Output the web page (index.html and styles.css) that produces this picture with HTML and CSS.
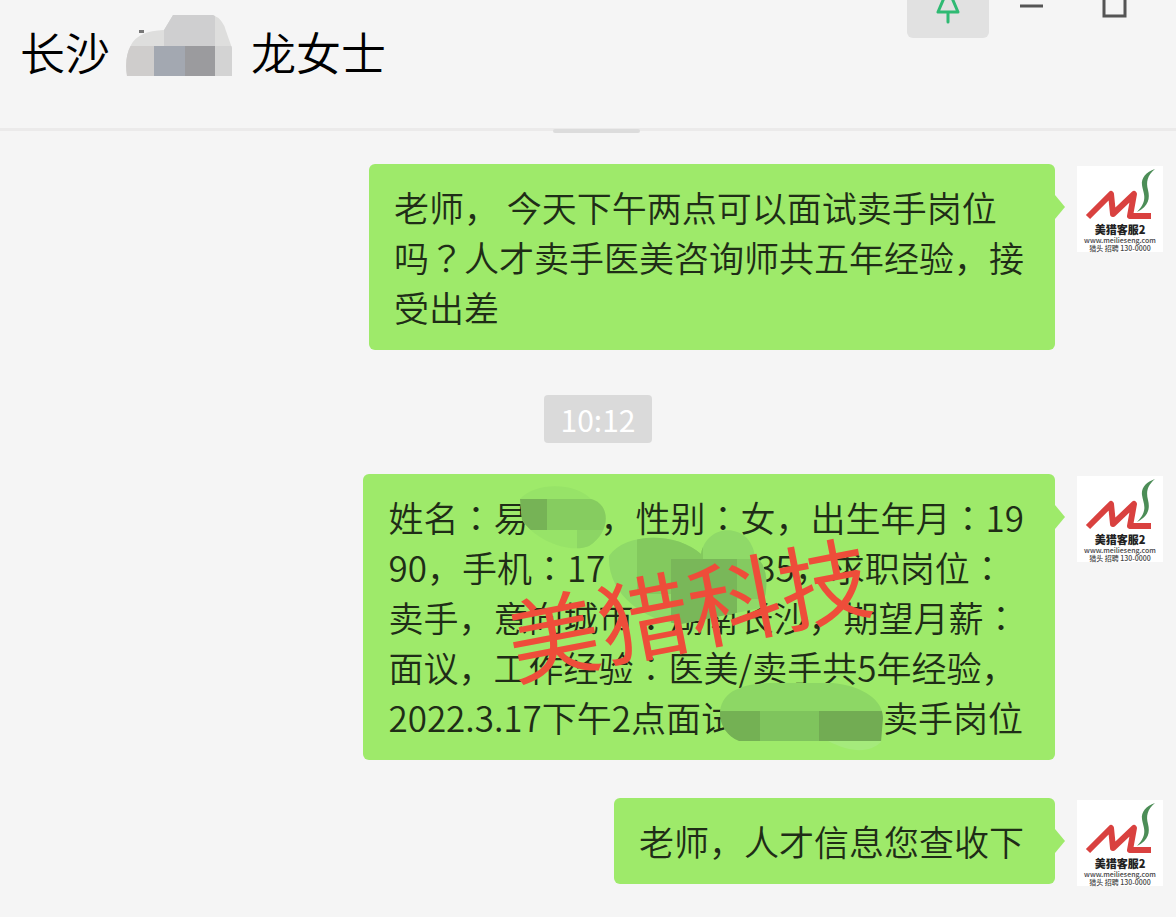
FILE: index.html
```
<!DOCTYPE html>
<html lang="zh-CN">
<head>
    <meta charset="UTF-8">
    <meta name="viewport" content="width=device-width, initial-scale=1">
    <title>长沙 龙女士</title>
    <link rel="stylesheet" href="styles.css">
</head>
<body>
    <svg class="defs" aria-hidden="true">
        <symbol id="logo" viewBox="0 0 86 56">
            <path d="M11 51 L34 28 L36 48 L57 28 L53 50 H74" fill="none" stroke="#d9413f" stroke-width="6" stroke-linejoin="round"/>
            <path d="M78 3 C69 6 64 12 65 19 C66 27 72 34 60 46 C72 40 73 32 71 24 C69 16 70 10 78 3 Z" fill="#4c8d57"/>
        </symbol>
    </svg>

    <header class="header">
        <h1 class="title">
            <span>长沙</span>
            <svg class="title-mask" width="108" height="64" viewBox="0 0 108 64" aria-hidden="true">
                <clipPath id="titleClip">
                    <path d="M2 62 Q-1 44 6 31 Q13 17 39 16 L48 1 H88 Q98 5 101 17 L107 34 V62 Z"/>
                </clipPath>
                <g clip-path="url(#titleClip)">
                    <rect width="108" height="64" fill="#dededd"/>
                    <rect x="39" width="51" height="32" fill="#cfcfd0"/>
                    <rect y="32" width="30" height="32" fill="#cfcdcc"/>
                    <rect x="29" y="32" width="31" height="32" fill="#a3a8b1"/>
                    <rect x="60" y="32" width="30" height="32" fill="#9b9b9e"/>
                    <rect x="90" y="32" width="18" height="32" fill="#d3d3d3"/>
                </g>
                <rect x="14" y="16" width="5" height="3" fill="#777"/>
            </svg>
            <span>龙女士</span>
        </h1>
        <div class="controls">
            <button type="button" class="control pin" aria-label="置顶">
                <svg width="82" height="38" viewBox="0 0 82 38">
                    <path d="M37 -2 L31 12 H51 L45 -2 M41 12 V22" fill="none" stroke="#2fba73" stroke-width="3" stroke-linecap="round" stroke-linejoin="round"/>
                </svg>
            </button>
            <button type="button" class="control" aria-label="最小化">
                <svg width="84" height="38" viewBox="0 0 84 38">
                    <path d="M31 6 H54" stroke="#555" stroke-width="3"/>
                </svg>
            </button>
            <button type="button" class="control" aria-label="最大化">
                <svg width="84" height="38" viewBox="0 0 84 38">
                    <path d="M31 -4 V16 H52 V-4" fill="none" stroke="#555" stroke-width="3"/>
                </svg>
            </button>
        </div>
    </header>

    <main class="chat">
        <div class="message">
            <div class="bubble">
                老师， 今天下午两点可以面试卖手岗位<br>
                吗<span lang="ja" class="mid">？</span>人才卖手医美咨询师共五年经验，接<br>
                受出差
            </div>
            <div class="avatar">
                <svg class="logo" aria-hidden="true"><use href="#logo"/></svg>
                <div class="avatar-name">美猎客服2</div>
                <div class="avatar-small">www.meilieseng.com</div>
                <div class="avatar-small">猎头 招聘 130-0000</div>
            </div>
        </div>

        <time class="time">10:12</time>

        <div class="message">
            <div class="bubble">
                姓名<span lang="ja" class="mid">：</span>易<span class="gap gap-name"></span>，性别<span lang="ja" class="mid">：</span>女，出生年月<span lang="ja" class="mid">：</span>19<br>
                90，手机<span lang="ja" class="mid">：</span>17<span class="gap gap-phone"></span>35，求职岗位<span lang="ja" class="mid">：</span><br>
                卖手，意向城市<span lang="ja" class="mid">：</span>湖南长沙，期望月薪<span lang="ja" class="mid">：</span><br>
                面议，工作经验<span lang="ja" class="mid">：</span>医美/卖手共5年经验，<br>
                2022.3.17下午2点面试<span class="gap gap-place"></span>卖手岗位
                <svg class="mosaic" width="692" height="286" viewBox="0 0 692 286" aria-hidden="true">
                    <clipPath id="nameClip">
                        <path d="M157 25 C172 8 212 8 228 25 C248 30 248 58 226 72 C206 80 172 66 159 46 Z"/>
                    </clipPath>
                    <g clip-path="url(#nameClip)">
                        <rect x="150" y="5" width="100" height="80" fill="#97e368"/>
                        <rect x="150" y="25" width="34" height="31" fill="#76b356"/>
                        <rect x="184" y="25" width="70" height="31" fill="#86cc60"/>
                        <rect x="214" y="56" width="40" height="30" fill="#8cd564"/>
                    </g>
                    <clipPath id="phoneClip">
                        <path d="M246 82 C262 58 314 58 338 80 C344 48 388 48 392 83 C406 90 406 118 398 134 L318 150 C282 148 244 120 246 82 Z"/>
                    </clipPath>
                    <g clip-path="url(#phoneClip)">
                        <rect x="240" y="50" width="170" height="110" fill="#8fd968"/>
                        <rect x="274" y="60" width="66" height="60" fill="#83c95e"/>
                        <rect x="308" y="85" width="66" height="65" fill="#79b759"/>
                        <rect x="374" y="85" width="36" height="40" fill="#84ca60"/>
                    </g>
                    <clipPath id="placeClip">
                        <path d="M357 242 C356 218 378 210 405 209 H470 C500 212 520 226 520 244 L518 268 C508 278 490 280 465 267 H376 C364 262 358 252 357 242 Z"/>
                    </clipPath>
                    <g clip-path="url(#placeClip)">
                        <rect x="350" y="205" width="175" height="32" fill="#8dd765"/>
                        <rect x="350" y="237" width="47" height="30" fill="#74b154"/>
                        <rect x="397" y="237" width="59" height="30" fill="#7fc45d"/>
                        <rect x="456" y="237" width="70" height="30" fill="#72ac53"/>
                        <rect x="450" y="267" width="75" height="15" fill="#a5ea7c"/>
                    </g>
                </svg>
                <span class="watermark">美猎科技</span>
            </div>
            <div class="avatar">
                <svg class="logo" aria-hidden="true"><use href="#logo"/></svg>
                <div class="avatar-name">美猎客服2</div>
                <div class="avatar-small">www.meilieseng.com</div>
                <div class="avatar-small">猎头 招聘 130-0000</div>
            </div>
        </div>

        <div class="message">
            <div class="bubble">老师，人才信息您查收下</div>
            <div class="avatar">
                <svg class="logo" aria-hidden="true"><use href="#logo"/></svg>
                <div class="avatar-name">美猎客服2</div>
                <div class="avatar-small">www.meilieseng.com</div>
                <div class="avatar-small">猎头 招聘 130-0000</div>
            </div>
        </div>
    </main>
</body>
</html>
```
FILE: styles.css
```
* {
    box-sizing: border-box;
}
body {
    margin: 0;
    min-height: 100vh;
    background-color: #f5f5f5;
    color: #1f2d17;
    font-family: "Noto Sans CJK SC", sans-serif;
    font-weight: 350;
    text-spacing-trim: space-all;
}
.defs {
    position: absolute;
    width: 0;
    height: 0;
}
.header {
    display: flex;
    justify-content: space-between;
    align-items: flex-start;
    height: 131px;
    padding: 0 19px 0 20px;
    border-bottom: 3px solid #ebeaea;
    position: relative;
}
.header::after {
    content: "";
    position: absolute;
    left: 553px;
    bottom: -5px;
    width: 87px;
    height: 4px;
    border-radius: 2px;
    background-color: #dcdcdc;
}
.title {
    display: flex;
    align-items: center;
    margin: 14px 0 0;
    color: #000;
    font-size: 45px;
    font-weight: 350;
    line-height: 76px;
}
.title-mask {
    align-self: flex-start;
    margin: 0 18px 0 15px;
}
.controls {
    display: flex;
}
.control {
    height: 38px;
    padding: 0;
    border: none;
    background: none;
    cursor: pointer;
}
.control svg {
    display: block;
}
.pin {
    border-radius: 0 0 6px 6px;
    background-color: #e1e1e1;
}
.chat {
    display: flex;
    flex-direction: column;
    padding: 33px 13px 31px 33px;
}
.message {
    display: flex;
    justify-content: flex-end;
    align-items: flex-start;
    gap: 22px;
}
.message + .message {
    margin-top: 38px;
}
.bubble {
    position: relative;
    padding: 18px 31px 18px 25px;
    border-radius: 6px;
    background-color: #9eea6a;
    font-size: 35px;
    line-height: 50px;
    white-space: nowrap;
}
.bubble::after {
    content: "";
    position: absolute;
    top: 31px;
    left: 100%;
    border: 12px solid transparent;
    border-left: 10px solid #9eea6a;
    border-right: none;
}
.mid {
    font-family: "Noto Sans CJK JP", sans-serif;
}
.gap {
    display: inline-block;
}
.gap-name {
    width: 72px;
}
.gap-phone {
    width: 151px;
}
.gap-place {
    width: 147px;
}
.mosaic {
    position: absolute;
    top: 0;
    left: 0;
}
.watermark {
    position: absolute;
    top: 76px;
    left: 141px;
    color: #ee4d3a;
    font-size: 92px;
    font-weight: 400;
    line-height: 110px;
    transform: rotate(-11deg);
}
.avatar {
    flex: none;
    width: 86px;
    height: 86px;
    margin-top: 2px;
    background-color: #fff;
    text-align: center;
}
.logo {
    display: block;
    width: 86px;
    height: 56px;
}
.avatar-name {
    color: #222;
    font-size: 11px;
    font-weight: 900;
    line-height: 14px;
}
.avatar-small {
    color: #444;
    font-size: 7px;
    font-weight: 500;
    line-height: 8px;
}
.time {
    align-self: center;
    width: 108px;
    margin: 45px 0 31px;
    border-radius: 4px;
    background-color: #dadada;
    color: #fff;
    font-size: 30px;
    font-weight: 400;
    line-height: 48px;
    text-align: center;
}
```
